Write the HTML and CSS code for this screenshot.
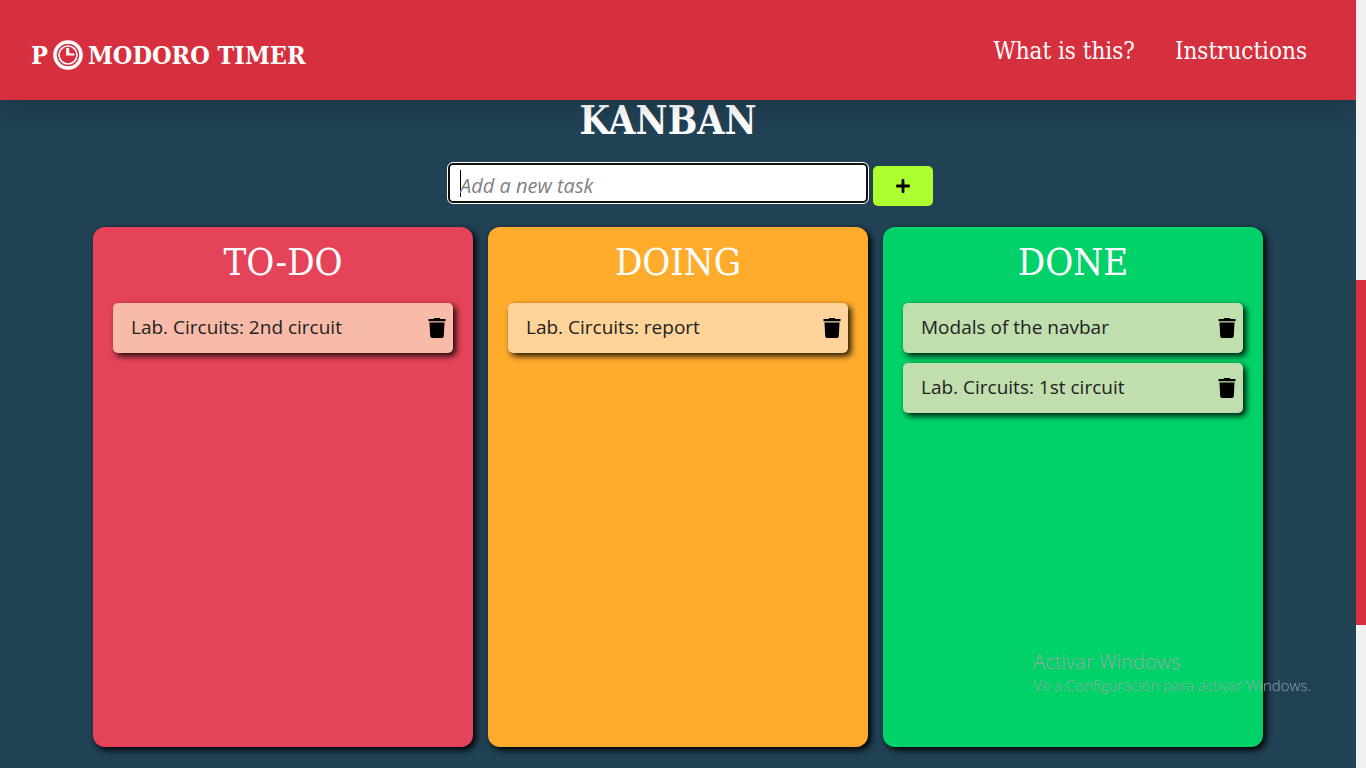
FILE: index.html
```html
<!DOCTYPE html>
<html lang="en">
<head>
<meta charset="utf-8">
<meta name="viewport" content="width=device-width, initial-scale=1">
<title>Pomodoro Timer</title>
<link rel="stylesheet" href="styles.css">
</head>
<body>
<svg class="sprite" aria-hidden="true">
  <symbol id="trash" viewBox="0 0 18 20">
    <path d="M0.5 1H5.6L6.2 0H11.8L12.4 1H17.5V3.2H0.5ZM1.5 4.5H16.5L15.8 18.3Q15.6 20 14 20H4Q2.4 20 2.2 18.3Z"/>
  </symbol>
</svg>
<div class="page">
  <header class="navbar">
    <a class="brand" href="#">
      <span>P</span>
      <svg class="brand-clock" viewBox="0 0 30 30" fill="none" stroke="#fff" aria-label="O" role="img">
        <circle cx="15" cy="15" r="13" stroke-width="3.6"/>
        <circle cx="15" cy="15" r="9" stroke-width="1.6"/>
        <path fill="#fff" stroke="none" d="M13.2 8H16L16.4 13.2L21.5 13.6V15.6H13.2Z"/>
      </svg>
      <span>MODORO TIMER</span>
    </a>
    <nav class="links">
      <a href="#what">What is this?</a>
      <a href="#instructions">Instructions</a>
    </nav>
  </header>
  <main class="kanban">
    <h1 class="title">KANBAN</h1>
    <form class="task-form">
      <input class="task-input" type="text" placeholder="Add a new task" aria-label="Add a new task">
      <button class="add" type="button" aria-label="Add task">
        <svg viewBox="0 0 14 14" width="14" height="14"><path d="M5.6 1Q5.6 0 6.4 0H7.6Q8.4 0 8.4 1V5.6H13Q14 5.6 14 6.4V7.6Q14 8.4 13 8.4H8.4V13Q8.4 14 7.6 14H6.4Q5.6 14 5.6 13V8.4H1Q0 8.4 0 7.6V6.4Q0 5.6 1 5.6H5.6Z"/></svg>
      </button>
    </form>
    <div class="board">
      <section class="column todo">
        <h2>TO-DO</h2>
        <ul>
          <li class="card"><span>Lab. Circuits: 2nd circuit</span><button type="button" aria-label="Delete"><svg><use href="#trash"/></svg></button></li>
        </ul>
      </section>
      <section class="column doing">
        <h2>DOING</h2>
        <ul>
          <li class="card"><span>Lab. Circuits: report</span><button type="button" aria-label="Delete"><svg><use href="#trash"/></svg></button></li>
        </ul>
      </section>
      <section class="column done">
        <h2>DONE</h2>
        <ul>
          <li class="card"><span>Modals of the navbar</span><button type="button" aria-label="Delete"><svg><use href="#trash"/></svg></button></li>
          <li class="card"><span>Lab. Circuits: 1st circuit</span><button type="button" aria-label="Delete"><svg><use href="#trash"/></svg></button></li>
        </ul>
      </section>
    </div>
  </main>
</div>
<div class="scrollbar"><div class="thumb"></div></div>
<aside class="watermark">
  <p class="watermark-title">Activar Windows</p>
  <p>Ve a Configuración para activar Windows.</p>
</aside>
</body>
</html>
```
FILE: styles.css
```css
* {
  box-sizing: border-box;
  margin: 0;
  padding: 0;
}

body {
  display: flex;
  min-height: 100vh;
  background: #214154;
  font-family: "Segoe UI", "Open Sans", "Noto Sans", sans-serif;
  font-size: 19px;
}

.sprite {
  position: absolute;
  width: 0;
  height: 0;
}

.page {
  flex: 1;
  min-width: 0;
}

.navbar {
  position: relative;
  z-index: 1;
  display: flex;
  justify-content: space-between;
  height: 100px;
  padding: 0 49px 0 31px;
  background: #d6303e;
  box-shadow: 0 5px 25px rgba(0, 0, 0, 0.2);
  font-family: "Roboto Slab", "DejaVu Serif Condensed", "DejaVu Serif", serif;
}

.navbar a {
  color: #fff;
  text-decoration: none;
}

.brand {
  display: flex;
  align-items: center;
  gap: 5px;
  padding-top: 10px;
  font-size: 25px;
  font-weight: 700;
}

.brand-clock {
  width: 30px;
  height: 30px;
}

.links {
  display: flex;
  align-items: center;
  gap: 40px;
  padding-top: 2px;
  font-size: 24px;
}

.title,
.column h2 {
  color: #fff;
  font-family: "Roboto Slab", "DejaVu Serif Condensed", "DejaVu Serif", serif;
  text-align: center;
}

.title {
  padding-right: 20px;
  font-size: 39px;
  line-height: 40px;
}

.task-form {
  display: flex;
  justify-content: center;
  gap: 5px;
  padding: 23px 0 21px 25px;
}

.task-input {
  width: 420px;
  height: 40px;
  padding: 4px 10px 0;
  border: 2px solid #101010;
  border-radius: 5px;
  outline: 1px solid #fff;
  background: linear-gradient(#000, #000) 10px 5px / 1px 27px no-repeat #fff;
  font: inherit;
  font-size: 20px;
}

.task-input::placeholder {
  color: #808080;
  font-style: italic;
}

.add {
  display: grid;
  place-items: center;
  width: 60px;
  height: 40px;
  margin-top: 3px;
  border: 0;
  border-radius: 5px;
  background: #adff2f;
}

.board {
  display: grid;
  grid-template-columns: repeat(3, 1fr);
  gap: 15px;
  max-width: 1170px;
  margin: 0 auto 20px;
}

.column {
  min-height: 520px;
  padding: 10px 20px 20px;
  border-radius: 12px;
  box-shadow: 3px 3px 6px #000;
}

.column h2 {
  margin-bottom: 16px;
  font-size: 38px;
  font-weight: 400;
  line-height: 50px;
}

.column ul {
  display: grid;
  gap: 10px;
  list-style: none;
}

.todo { background: #e54359; }
.doing { background: #ffac2d; }
.done { background: #00d269; }

.card {
  display: flex;
  align-items: center;
  justify-content: space-between;
  height: 50px;
  padding: 0 7px 0 18px;
  border-radius: 5px;
  box-shadow: 3px 3px 6px rgba(0, 0, 0, 0.9);
  color: #222;
}

.card span {
  padding-bottom: 2px;
}

.card button {
  border: 0;
  background: none;
}

.card svg {
  display: block;
  width: 18px;
  height: 20px;
}

.todo .card { background: #f8bbaa; }
.doing .card { background: #ffd399; }
.done .card { background: #c0deae; }

.scrollbar {
  position: relative;
  z-index: 2;
  width: 10px;
  padding-top: 280px;
  background: #f1f1f1;
}

.thumb {
  height: 345px;
  background: #d6303e;
}

.watermark {
  position: fixed;
  z-index: 2;
  right: 55px;
  bottom: 73px;
  color: #98a3a3;
  font-size: 15px;
  font-weight: 300;
  line-height: 20px;
}

.watermark-title {
  font-size: 20px;
  line-height: 26px;
}
```
